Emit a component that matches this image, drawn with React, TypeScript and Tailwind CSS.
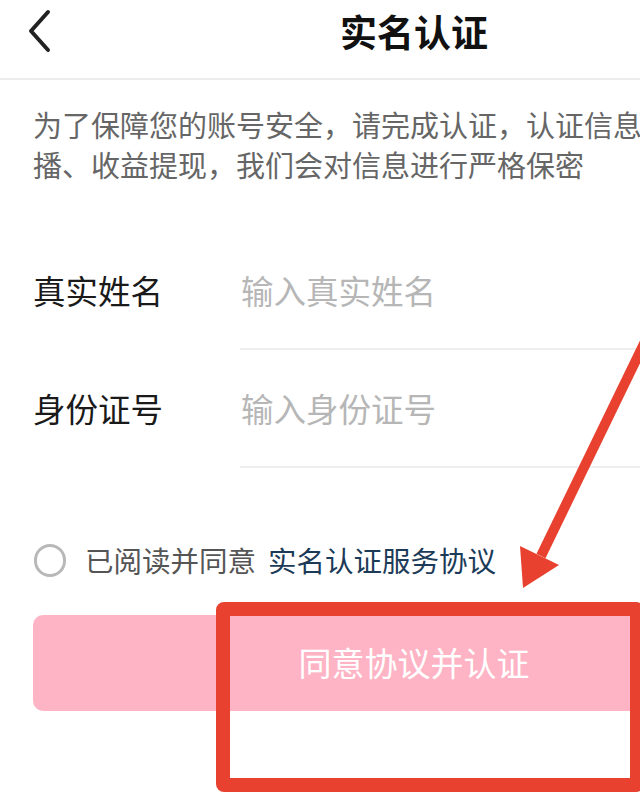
import React from 'react';

const cjk = { fontFamily: '"Noto Sans CJK SC", "Noto Sans", sans-serif' };

// Form row with label on the left and a bottom-ruled input on the right
function FieldRow({ label, placeholder }: { label: string; placeholder: string }) {
  return (
    <div className="flex h-[118px]">
      <div className="w-[240px] pl-[33px] flex items-center text-[32.5px] text-[#1a1a1a] pb-[2px]">{label}</div>
      <div className="flex-1 flex items-center pl-[1px] border-b-2 border-[#eeeeee] text-[32.5px] text-[#b6b6b6]">
        {placeholder}
      </div>
    </div>
  );
}

export default function App() {
  return (
    <div className="relative w-[640px] h-[794px] overflow-hidden bg-white" style={cjk}>
      <div className="w-[828px]">
        {/* Header */}
        <div className="relative h-[80px] flex justify-center pt-[9px] border-b-2 border-[#ececec]">
          <svg className="absolute left-[26px] top-[9px]" width="26" height="44" viewBox="0 0 26 44">
            <polyline
              points="22,3 5,22 22,41"
              fill="none"
              stroke="#222"
              strokeWidth="4"
              strokeLinecap="round"
              strokeLinejoin="round"
            />
          </svg>
          <div className="text-[37px] leading-[44px] font-bold text-[#111]">实名认证</div>
        </div>

        {/* Notice */}
        <div className="mt-[24px] px-[33px] text-[29px] leading-[40px] text-[#666] whitespace-nowrap">
          <div>为了保障您的账号安全，请完成认证，认证信息将用于直</div>
          <div>播、收益提现，我们会对信息进行严格保密</div>
        </div>

        {/* Form */}
        <div className="mt-[48px]">
          <FieldRow label="真实姓名" placeholder="输入真实姓名" />
          <FieldRow label="身份证号" placeholder="输入身份证号" />
        </div>

        {/* Agreement */}
        <div className="mt-[72px] h-[40px] pl-[34px] flex items-center">
          <div className="w-[32px] h-[33px] rounded-full border-[3px] border-[#b8b8b8]" />
          <div className="ml-[19px] text-[28.5px] text-[#555]">已阅读并同意</div>
          <div className="ml-[12px] text-[28.5px] text-[#1c3b58]">实名认证服务协议</div>
        </div>

        {/* Submit */}
        <div className="mt-[35px] mx-[33px] h-[96px] rounded-[10px] bg-[#feb4c5] flex items-center justify-center text-[33px] text-white">
          同意协议并认证
        </div>
      </div>

      {/* Annotation: red box */}
      <div className="absolute left-[216px] top-[602px] w-[428px] h-[190px] border-[14px] border-[#e8412f] rounded-[8px]" />

      {/* Annotation: arrow */}
      <svg className="absolute left-0 top-0" width="640" height="794" viewBox="0 0 640 794">
        <line x1="670" y1="290" x2="541" y2="556" stroke="#e8412f" strokeWidth="10" />
        <polygon points="523,588 520,546 559,565" fill="#e8412f" />
      </svg>
    </div>
  );
}
